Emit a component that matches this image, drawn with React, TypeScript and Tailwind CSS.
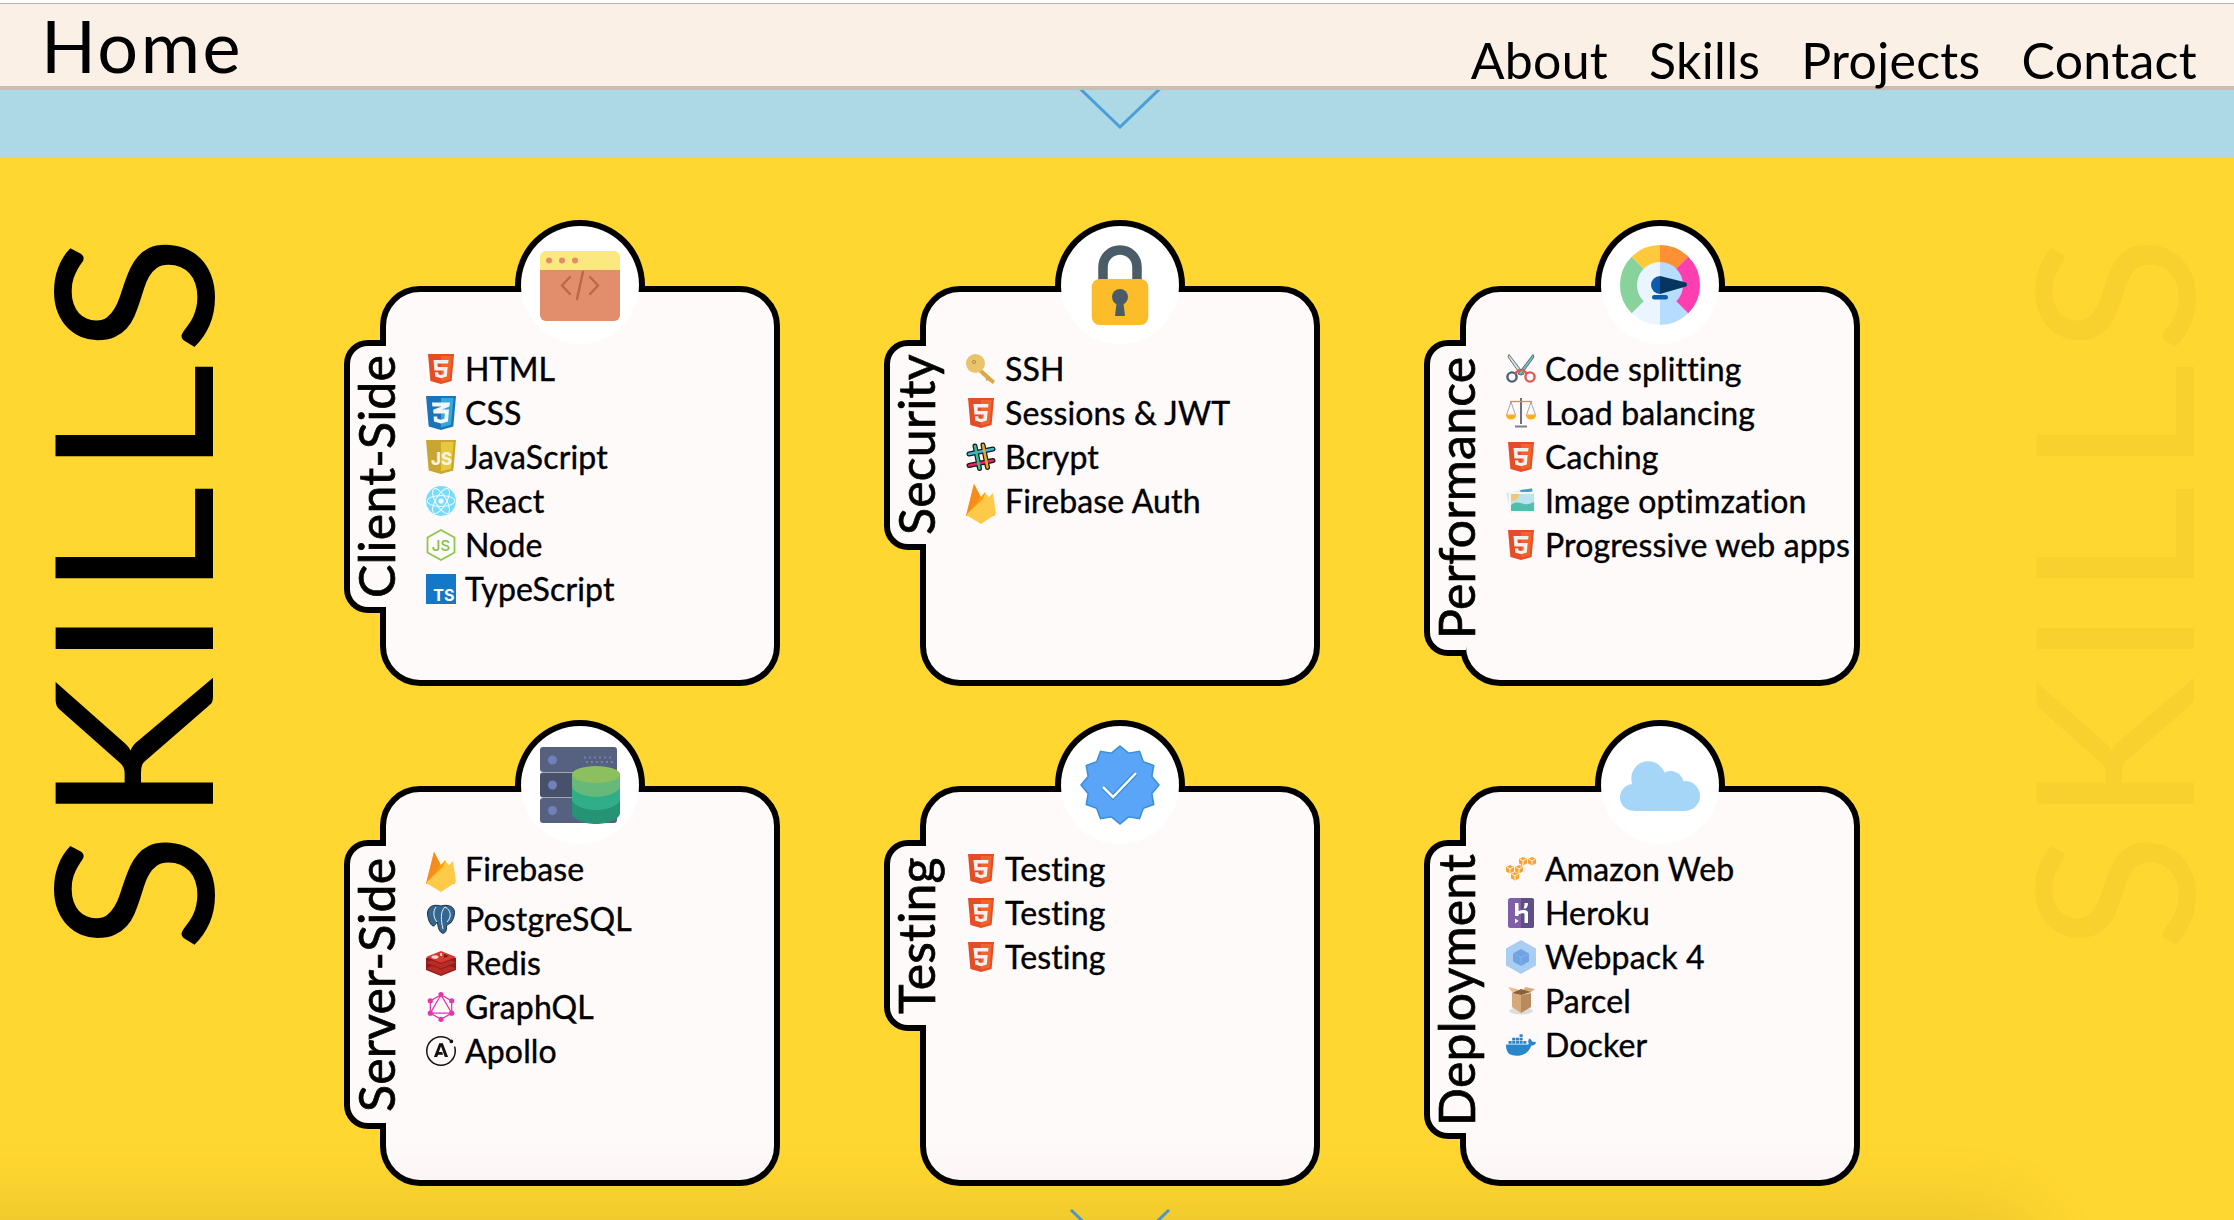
import React from "react";
import { SiGraphql, SiApollographql, SiDocker } from "react-icons/si";

const Html = () => (
  <svg viewBox="0 0 30 30" className="w-[30px] h-[30px]">
    <path d="M2 0H28L25.6 27L15 30L4.4 27Z" fill="#e44d26" />
    <path d="M15 2V27.8L23.8 25.4L25.8 2Z" fill="#f16529" />
    <path d="M7.5 6H22.5L22.1 9.6H11.5L11.8 13H21.7L20.8 22.6L15 24.3L9.2 22.6L8.9 18.2H12.3L12.5 20.2L15 20.9L17.5 20.2L17.8 16.5H8.4Z" fill="#f5f0ee" />
  </svg>
);
const Css = () => (
  <svg viewBox="0 0 30 34" className="w-[30px] h-[34px]">
    <path d="M0 0H30L27.3 30.6L15 34L2.7 30.6Z" fill="#1b73ba" />
    <path d="M15 2V31.4L25 28.8L27.6 2Z" fill="#33a9dc" />
    <path d="M6 6.5H24L23.4 10.5L16 13.5H23L22 25.5L15 27.5L8 25.5L7.6 20.5H11.3L11.5 22.8L15 23.8L18.4 22.8L18.8 17.5H7.5L7.2 13.8L15.5 10.4H6.4Z" fill="#f4f6f8" />
  </svg>
);
const Js = () => (
  <svg viewBox="0 0 30 34" className="w-[30px] h-[34px]">
    <path d="M0 0H30L27.3 30.6L15 34L2.7 30.6Z" fill="#c9a532" />
    <path d="M15 2V31.4L25 28.8L27.6 2Z" fill="#e8c83c" />
    <text x="5" y="25" fontFamily="Inter, sans-serif" fontWeight="800" fontSize="17" fill="#f7f3df">JS</text>
  </svg>
);
const ReactLogo = () => (
  <svg viewBox="0 0 30 30" className="w-[30px] h-[30px]">
    <circle cx="15" cy="15" r="15" fill="#76dcfb" />
    <g fill="none" stroke="#f2fbfe" strokeWidth="1">
      <ellipse cx="15" cy="15" rx="14" ry="5.4" />
      <ellipse cx="15" cy="15" rx="14" ry="5.4" transform="rotate(60 15 15)" />
      <ellipse cx="15" cy="15" rx="14" ry="5.4" transform="rotate(120 15 15)" />
    </g>
    <circle cx="15" cy="15" r="2.6" fill="#f2fbfe" />
  </svg>
);
const NodeLogo = () => (
  <svg viewBox="0 0 30 32" className="w-[30px] h-[32px]">
    <path d="M15 1L28.5 8.5V23.5L15 31L1.5 23.5V8.5Z" fill="none" stroke="#8cc84b" strokeWidth="1.8" />
    <text x="15" y="21.500" textAnchor="middle" fontFamily="Inter, sans-serif" fontWeight="500" fontSize="15" fill="#7fbf3f">JS</text>
  </svg>
);
const Ts = () => (
  <svg viewBox="0 0 30 30" className="w-[30px] h-[30px]">
    <rect width="30" height="30" fill="#1478c8" />
    <text x="28.500" y="27" textAnchor="end" fontFamily="Inter, sans-serif" fontWeight="700" fontSize="16" fill="#fff">TS</text>
  </svg>
);
const KeyLogo = () => (
  <svg viewBox="0 0 30 30" className="w-[30px] h-[30px]">
    <path d="M11 11L29 27L27 30L22 26.5L20 26.8L19.5 24L17 22L10 15Z" fill="#d9a94e" />
    <circle cx="9.5" cy="9.5" r="9.5" fill="#eac36c" />
    <circle cx="8" cy="8" r="2" fill="#b98d3a" />
    <circle cx="8" cy="8" r="1" fill="#eac36c" />
  </svg>
);
const Slack = () => (
  <svg viewBox="0 0 30 30" className="w-[30px] h-[30px]" strokeLinecap="round" fill="none">
    <path d="M3 12L27 7M3 23.500L27 18.500M9 4L13.500 26.500M17 3L21.500 25.500" stroke="#17171d" strokeWidth="5" />
    <path d="M3 12L27 7" stroke="#3eb7d6" strokeWidth="2.600" />
    <path d="M3 23.500L27 18.500" stroke="#e0275d" strokeWidth="2.600" />
    <path d="M9 4L13.500 26.500" stroke="#3eb991" strokeWidth="2.600" />
    <path d="M17 3L21.500 25.500" stroke="#e9a820" strokeWidth="2.600" />
  </svg>
);
const Fire = () => (
  <svg viewBox="0 0 30 40" className="w-[30px] h-[40px]">
    <path d="M0 32L8 0L15 13L19 8L29 32Z" fill="#ffa000" />
    <path d="M0 32L8 0L14 12L12 17Z" fill="#f78c1e" />
    <path d="M27 9L30 30L15 40L0 31L17 15L19 9L23 13Z" fill="#ffca4a" />
  </svg>
);
const Scissors = () => (
  <svg viewBox="0 0 30 30" className="w-[30px] h-[30px]">
    <path d="M3 0.5L18 20L15 21L2 3Z" fill="#dbe6ea" stroke="#50606c" strokeWidth="0.9" />
    <path d="M27 0.5L12 20L15 21L28 3Z" fill="#6fc0bd" stroke="#50606c" strokeWidth="0.9" />
    <g fill="none" strokeWidth="2.4">
      <circle cx="6" cy="23" r="4.6" stroke="#4b6072" />
      <circle cx="24" cy="23" r="4.6" stroke="#e0584f" />
    </g>
    <path d="M9 19.5L14 15.5M21 19.5L16 15.5" stroke="#e0584f" strokeWidth="2.6" />
  </svg>
);
const Scale = () => (
  <svg viewBox="0 0 30 30" className="w-[30px] h-[30px]">
    <path d="M15 0V26" stroke="#6b6f7d" strokeWidth="2" />
    <path d="M9 27.5H21V29.5H9Z" fill="#7a7e8b" />
    <path d="M4 3.5H26" stroke="#c7926e" strokeWidth="1.3" />
    <path d="M5 4L0.5 17M5 4L9.5 17M25 4L20.5 17M25 4L29.5 17" stroke="#8b8e9a" strokeWidth="0.8" />
    <path d="M0 16.5H10C10 20 8 21.5 5 21.5S0 20 0 16.5Z" fill="#ffb018" />
    <path d="M20 16.5H30C30 20 28 21.5 25 21.5S20 20 20 16.5Z" fill="#ffb018" />
  </svg>
);
const ImageLogo = () => (
  <svg viewBox="0 0 30 26" className="w-[30px] h-[26px]">
    <path d="M0 5L26 0L27 4L5 26Z" fill="#dfe8ec" />
    <path d="M14 2L26 0.5L26.5 3.5L15 5Z" fill="#4a9dc0" />
    <rect x="3" y="4" width="26" height="21" fill="#f2f6f8" />
    <rect x="5" y="6" width="23" height="17" fill="#bde4ee" />
    <path d="M5 6H13C13 10 10 13 5 13Z" fill="#f5c668" />
    <path d="M5 17C10 13 14 15 18 16C22 17 25 15 28 14V23H5Z" fill="#4fc0ae" />
  </svg>
);
const Postgres = () => (
  <svg viewBox="0 0 30 30" className="w-[30px] h-[30px]">
    <path
      d="M15 2C8 0 2 2 1.500 9C1.500 14 4 21 7 22C9 22.500 10 19 11 18C12 20 12 27 16 29C19 30 21 27 20.500 22C21 20 25 20 26 17C29 12 30 5 25 2.500C22 1 18 1 15 2Z"
      fill="#336791"
      stroke="#1f2f40"
      strokeWidth="1"
    />
    <g fill="none" stroke="#fff" strokeWidth="0.9">
      <path d="M10 3C7 7 7 13 11 18" />
      <path d="M19 3C14 8 15 16 17 25" />
      <path d="M19 3C25 6 26 13 21 18" />
    </g>
  </svg>
);
const Redis = () => (
  <svg viewBox="0 0 30 26" className="w-[30px] h-[26px]">
    <path d="M0 8V20L15 26L30 20V8Z" fill="#8f1d1b" />
    <path d="M0 18.500L15 24.500L30 18.500L15 12.500Z" fill="#b92b27" />
    <path d="M0 13.500L15 19.500L30 13.500L15 7.500Z" fill="#8f1d1b" />
    <path d="M0 12.500L15 18.500L30 12.500L15 6.500Z" fill="#b92b27" />
    <path d="M0 8L15 14L30 8L15 2Z" fill="#8f1d1b" />
    <path d="M0 7L15 13L30 7L15 1Z" fill="#d9382f" />
    <ellipse cx="9" cy="7" rx="3.500" ry="1.800" fill="#f5d5d3" />
    <path d="M18 4L23 6L18 8Z" fill="#7a1c18" />
    <path d="M14 3.500L16 3L15.500 5L17 5.500L14.500 6Z" fill="#fff" />
  </svg>
);
const Heroku = () => (
  <svg viewBox="0 0 26 30" className="w-[26px] h-[30px]">
    <rect width="26" height="30" rx="2.500" fill="#7f5fa8" />
    <path d="M13 0H23.500A2.500 2.500 0 0 1 26 2.500V27.500A2.500 2.500 0 0 1 23.500 30H13Z" fill="#5f4f86" />
    <path d="M7 5H10.500V13C13 12 20 10.500 20 15V25H16.500V16C16.500 14.500 12 15.500 10.500 16.500V18H7Z" fill="#fff" />
    <path d="M16.500 5H20C20 7 19.500 9 18 10.500H15.500C16.500 9 16.500 7 16.500 5Z" fill="#fff" />
    <path d="M7 20.500L10.500 23L7 25.500Z" fill="#fff" />
  </svg>
);
const Amazon = () => {
  const Cube = ({ x, y }: { x: number; y: number }) => (
    <g transform={`translate(${x} ${y})`}>
      <path d="M4 0L8 2V6.6L4 8.6L0 6.6V2Z" fill="#f8a633" />
      <path d="M0.8 2.2L4 3.8L7.2 2.2M4 3.8V8" fill="none" stroke="#fff" strokeWidth="0.8" />
    </g>
  );
  return (
    <svg viewBox="0 0 30 24" className="w-[30px] h-[24px]">
      <Cube x={13} y={0} />
      <Cube x={22} y={0} />
      <Cube x={0} y={8} />
      <Cube x={9} y={8} />
      <Cube x={5} y={15} />
      <path d="M16 8L14 10" stroke="#f8a633" strokeWidth="1" />
    </svg>
  );
};
const Webpack = () => (
  <svg viewBox="0 0 30 34" className="w-[30px] h-[34px]">
    <path d="M15 0L30 8.5V25.5L15 34L0 25.5V8.5Z" fill="#aacdf2" />
    <path d="M15 9L23 13.5V21.5L15 26L7 21.5V13.5Z" fill="#6ea3e4" />
    <path d="M7 13.5L15 17.5L23 13.5M15 17.5V26" stroke="#8bb8ec" strokeWidth="0.7" fill="none" />
  </svg>
);
const Parcel = () => (
  <svg viewBox="0 0 30 30" className="w-[30px] h-[30px]">
    <ellipse cx="15" cy="25" rx="12" ry="3.5" fill="#ddd" />
    <path d="M15 9L25 7V21L15 27Z" fill="#b98a5b" />
    <path d="M15 9L6 7V21L15 27Z" fill="#d7a878" />
    <path d="M15 9L6 6L2 1L11 3Z" fill="#e7bd8f" />
    <path d="M15 9L25 6L29 3L19 1Z" fill="#d9ab7b" />
    <path d="M6 7L15 3L25 6L15 9Z" fill="#8a6038" />
  </svg>
);

const Browser = () => (
  <svg viewBox="0 0 80 80" className="w-[80px] h-[80px]">
    <path d="M0 25H80V70A6 6 0 0 1 74 76H6A6 6 0 0 1 0 70Z" fill="#e28d6b" />
    <path d="M6 6H74A6 6 0 0 1 80 12V25H0V12A6 6 0 0 1 6 6Z" fill="#fbe97f" />
    <g fill="#e68a6b">
      <circle cx="9" cy="15.500" r="3" />
      <circle cx="22" cy="15.500" r="3" />
      <circle cx="35" cy="15.500" r="3" />
    </g>
    <g fill="none" stroke="#b9684a" strokeWidth="2.400" strokeLinecap="round">
      <path d="M30 32L22 40.500L30 49" />
      <path d="M50 32L58 40.500L50 49" />
      <path d="M43 27L37 54" />
    </g>
  </svg>
);
const Lock = () => (
  <svg viewBox="0 0 80 80" className="w-[80px] h-[80px]">
    <path d="M23 36V23A17 17 0 0 1 57 23V36" transform="translate(0 -1)" fill="none" stroke="#4a5c68" strokeWidth="9.500" />
    <rect x="11.700" y="34" width="56.600" height="46" rx="8" fill="#fdbd2a" />
    <circle cx="40" cy="52" r="8" fill="#4a5c68" />
    <path d="M37 54H43L45 71H35Z" fill="#4a5c68" />
  </svg>
);
const arc = (r: number, a0: number, a1: number) => {
  const p = (a: number) => `${40 + r * Math.cos((a * Math.PI) / 180)} ${40 + r * Math.sin((a * Math.PI) / 180)}`;
  return `M${p(a0)}A${r} ${r} 0 ${a1 - a0 > 180 ? 1 : 0} 1 ${p(a1)}`;
};
const Gauge = () => (
  <svg viewBox="0 0 80 80" className="w-[80px] h-[80px]">
    <path d="M40 0A40 40 0 0 0 40 80Z" fill="#ebf5ff" />
    <path d="M40 0A40 40 0 0 1 40 80Z" fill="#b6dcff" />
    <g fill="none" strokeWidth="17">
      <path d={arc(31.5, 135, 225)} stroke="#88d39c" />
      <path d={arc(31.5, 225, 270)} stroke="#ffc93c" />
      <path d={arc(31.5, 270, 315)} stroke="#ff9033" />
      <path d={arc(31.5, 315, 405)} stroke="#ff3fb0" />
    </g>
    <path d="M40 31A9 9 0 0 0 40 49Z" fill="#0b5cad" />
    <path d="M40 31L66 37.500Q68 40 66 41.500L40 49Z" fill="#06365f" />
    <rect x="32" y="50" width="16" height="4.500" rx="2.250" fill="#0b5cad" />
  </svg>
);
const Servers = () => (
  <svg viewBox="0 0 80 80" className="w-[80px] h-[80px]">
    <rect x="0" y="2" width="77" height="25" rx="3" fill="#56617f" />
    <rect x="0" y="27.500" width="77" height="25" rx="3" fill="#47526a" />
    <rect x="0" y="53" width="77" height="25" rx="3" fill="#56617f" />
    <g fill="#7080b8">
      <circle cx="12.500" cy="15" r="4.500" />
      <circle cx="12.500" cy="40" r="4.500" />
      <circle cx="12.500" cy="65.500" r="4.500" />
    </g>
    <g fill="#7080b8">
      {[44, 49, 54, 59, 64, 69].map((x) => (
        <rect key={x} x={x} y="11.500" width="2" height="2" />
      ))}
      {[46, 51, 56, 61, 66, 71].map((x) => (
        <rect key={x} x={x} y="16" width="2" height="2" />
      ))}
    </g>
    <path d="M32 68C32 74 44 79 56 79S80 74 80 68V55H32Z" fill="#269375" />
    <path d="M32 54C32 60 44 65 56 65S80 60 80 54V41H32Z" fill="#2fae88" />
    <path d="M32 41C32 47 44 51.700 56 51.700S80 47 80 41V29H32Z" fill="#66b978" />
    <ellipse cx="56" cy="29.500" rx="24" ry="8.500" fill="#8cc05e" />
  </svg>
);
const badgePoints = Array.from({ length: 24 }, (_, i) => {
  const a = (i * 15 - 90) * (Math.PI / 180);
  const r = i % 2 === 0 ? 39 : 33;
  return `${(40 + r * Math.cos(a)).toFixed(2)},${(40 + r * Math.sin(a)).toFixed(2)}`;
}).join(" ");
const Badge = () => (
  <svg viewBox="0 0 80 80" className="w-[80px] h-[80px]">
    <polygon points={badgePoints} fill="#5aa5f8" stroke="#3a8fd5" strokeWidth="1.500" />
    <path d="M23 42L33 52L56 28" fill="none" stroke="#3a8fd5" strokeWidth="5" />
    <path d="M23 42L33 52L56 28" fill="none" stroke="#ffffff" strokeWidth="2.500" />
  </svg>
);
const Cloud = () => (
  <svg viewBox="0 0 80 80" className="w-[80px] h-[80px]" fill="#a5d6f7">
    <circle cx="28.300" cy="33.300" r="17" />
    <circle cx="50.600" cy="39" r="13" />
    <circle cx="65" cy="51" r="15" />
    <circle cx="13.300" cy="52.300" r="13.300" />
    <rect x="13" y="40" width="52" height="26" />
  </svg>
);

type Item = { icon: React.ReactNode; label: string; tall?: boolean };
type Card = { title: string; tab: number; hero: React.ReactNode; items: Item[] };

const cards: Card[] = [
  {
    title: "Client-Side", tab: 273, hero: <Browser />,
    items: [
      { icon: <Html />, label: "HTML" },
      { icon: <Css />, label: "CSS" },
      { icon: <Js />, label: "JavaScript" },
      { icon: <ReactLogo />, label: "React" },
      { icon: <NodeLogo />, label: "Node" },
      { icon: <Ts />, label: "TypeScript" },
    ],
  },
  {
    title: "Security", tab: 210, hero: <Lock />,
    items: [
      { icon: <KeyLogo />, label: "SSH" },
      { icon: <Html />, label: "Sessions & JWT" },
      { icon: <Slack />, label: "Bcrypt" },
      { icon: <Fire />, label: "Firebase Auth", tall: true },
    ],
  },
  {
    title: "Performance", tab: 316, hero: <Gauge />,
    items: [
      { icon: <Scissors />, label: "Code splitting" },
      { icon: <Scale />, label: "Load balancing" },
      { icon: <Html />, label: "Caching" },
      { icon: <ImageLogo />, label: "Image optimzation" },
      { icon: <Html />, label: "Progressive web apps" },
    ],
  },
  {
    title: "Server-Side", tab: 289, hero: <Servers />,
    items: [
      { icon: <Fire />, label: "Firebase", tall: true },
      { icon: <Postgres />, label: "PostgreSQL" },
      { icon: <Redis />, label: "Redis" },
      { icon: <SiGraphql size={30} color="#e535ab" />, label: "GraphQL" },
      { icon: <SiApollographql size={30} color="#111" />, label: "Apollo" },
    ],
  },
  {
    title: "Testing", tab: 191, hero: <Badge />,
    items: [
      { icon: <Html />, label: "Testing" },
      { icon: <Html />, label: "Testing" },
      { icon: <Html />, label: "Testing" },
    ],
  },
  {
    title: "Deployment", tab: 299, hero: <Cloud />,
    items: [
      { icon: <Amazon />, label: "Amazon Web" },
      { icon: <Heroku />, label: "Heroku" },
      { icon: <Webpack />, label: "Webpack 4" },
      { icon: <Parcel />, label: "Parcel" },
      { icon: <SiDocker size={30} color="#2a86c8" />, label: "Docker" },
    ],
  },
];

function SkillCard({ card }: { card: Card }) {
  return (
    <div className="relative w-[400px] h-[400px] rounded-[40px] border-[6px] border-black bg-[#fffafa]">
      <div className="absolute left-[129px] top-[-72px] w-[130px] h-[72px] overflow-hidden">
        <div className="w-[130px] h-[130px] rounded-full bg-black" />
      </div>
      <div className="absolute left-[135px] top-[-66px] w-[118px] h-[118px] rounded-full bg-white flex items-center justify-center">
        {card.hero}
      </div>
      <div
        className="absolute left-[-42px] top-[48px] w-[42px] rounded-l-[24px] border-[6px] border-r-0 border-black bg-[#fffafa] flex justify-center"
        style={{ height: card.tab }}
      >
        <span className="[writing-mode:vertical-rl] rotate-180 text-[50px] leading-[60px] w-[60px] h-full shrink-0 text-center whitespace-nowrap text-black translate-x-[8px] tracking-[0.2px] [-webkit-text-stroke:0.7px_black]">
          {card.title}
        </span>
      </div>
      <ul className="pt-[55px] pl-[40px]">
        {card.items.map((it, i) => (
          <li key={i} className={`flex items-center gap-[9px] ${it.tall ? "h-[50px]" : "h-[44px]"}`}>
            <span className="w-[30px] flex justify-center shrink-0">{it.icon}</span>
            <span className={`text-[32px] leading-[44px] tracking-[0.15px] whitespace-nowrap text-black [-webkit-text-stroke:0.4px_black] ${it.tall ? "-mt-[7px]" : ""}`}>
              {it.label}
            </span>
          </li>
        ))}
      </ul>
    </div>
  );
}

export default function App() {
  return (
    <div className="relative w-full h-[1220px] overflow-hidden bg-[#ffd730] font-['Lato','Liberation_Sans',sans-serif]">
      <div className="h-[3px] bg-white" />
      <header className="h-[87px] border-t border-[#b5b5b5] border-b-[4px] border-b-[#c9bdb6] bg-[#faf0e6] flex items-end justify-between pl-[41px] pr-[37px] text-black">
        <div className="text-[72px] leading-[72px] mb-[5px] tracking-[2.5px]">Home</div>
        <nav className="flex gap-[41px] text-[50px] leading-[50px] mb-[1px] tracking-[0.3px]">
          <span>About</span>
          <span>Skills</span>
          <span>Projects</span>
          <span>Contact</span>
        </nav>
      </header>
      <div className="relative h-[68px] bg-[#add8e6] overflow-hidden flex justify-center">
        <svg viewBox="0 0 100 50" className="w-[100px] h-[50px] mt-[-11px] ml-[6px]">
          <path d="M1 1L50 48L99 1" fill="none" stroke="#4a9fd9" strokeWidth="3" />
        </svg>
      </div>
      <main className="flex h-[1062px]">
        <aside className="w-[380px] shrink-0 pt-[59px] pl-[18px]">
          <div className="[writing-mode:vertical-rl] rotate-180 text-[220px] leading-[220px] tracking-[9px] whitespace-nowrap text-black w-[220px] h-[745px] text-center">
            SKILLS
          </div>
        </aside>
        <section className="grid grid-cols-[400px_400px_400px] grid-rows-[400px_400px] gap-x-[140px] gap-y-[100px] pt-[128px]">
          {cards.map((c) => (
            <SkillCard key={c.title} card={c} />
          ))}
        </section>
        <aside className="flex-1 pt-[59px] flex justify-end pr-[15px]">
          <div className="[writing-mode:vertical-rl] rotate-180 text-[220px] leading-[220px] tracking-[9px] whitespace-nowrap text-black/[0.025] w-[220px] h-[745px] text-center">
            SKILLS
          </div>
        </aside>
      </main>
      <svg viewBox="0 0 100 50" className="absolute left-[1070px] top-[1209px] w-[100px] h-[50px]">
        <path d="M1 1L50 48L99 1" fill="none" stroke="#4a9fd9" strokeWidth="3" />
      </svg>
      <div className="absolute left-[-100px] top-[1240px] w-[2110px] h-[60px] rounded-[60px] shadow-[0_0_70px_30px_rgba(90,70,20,0.14)] pointer-events-none" />
    </div>
  );
}
